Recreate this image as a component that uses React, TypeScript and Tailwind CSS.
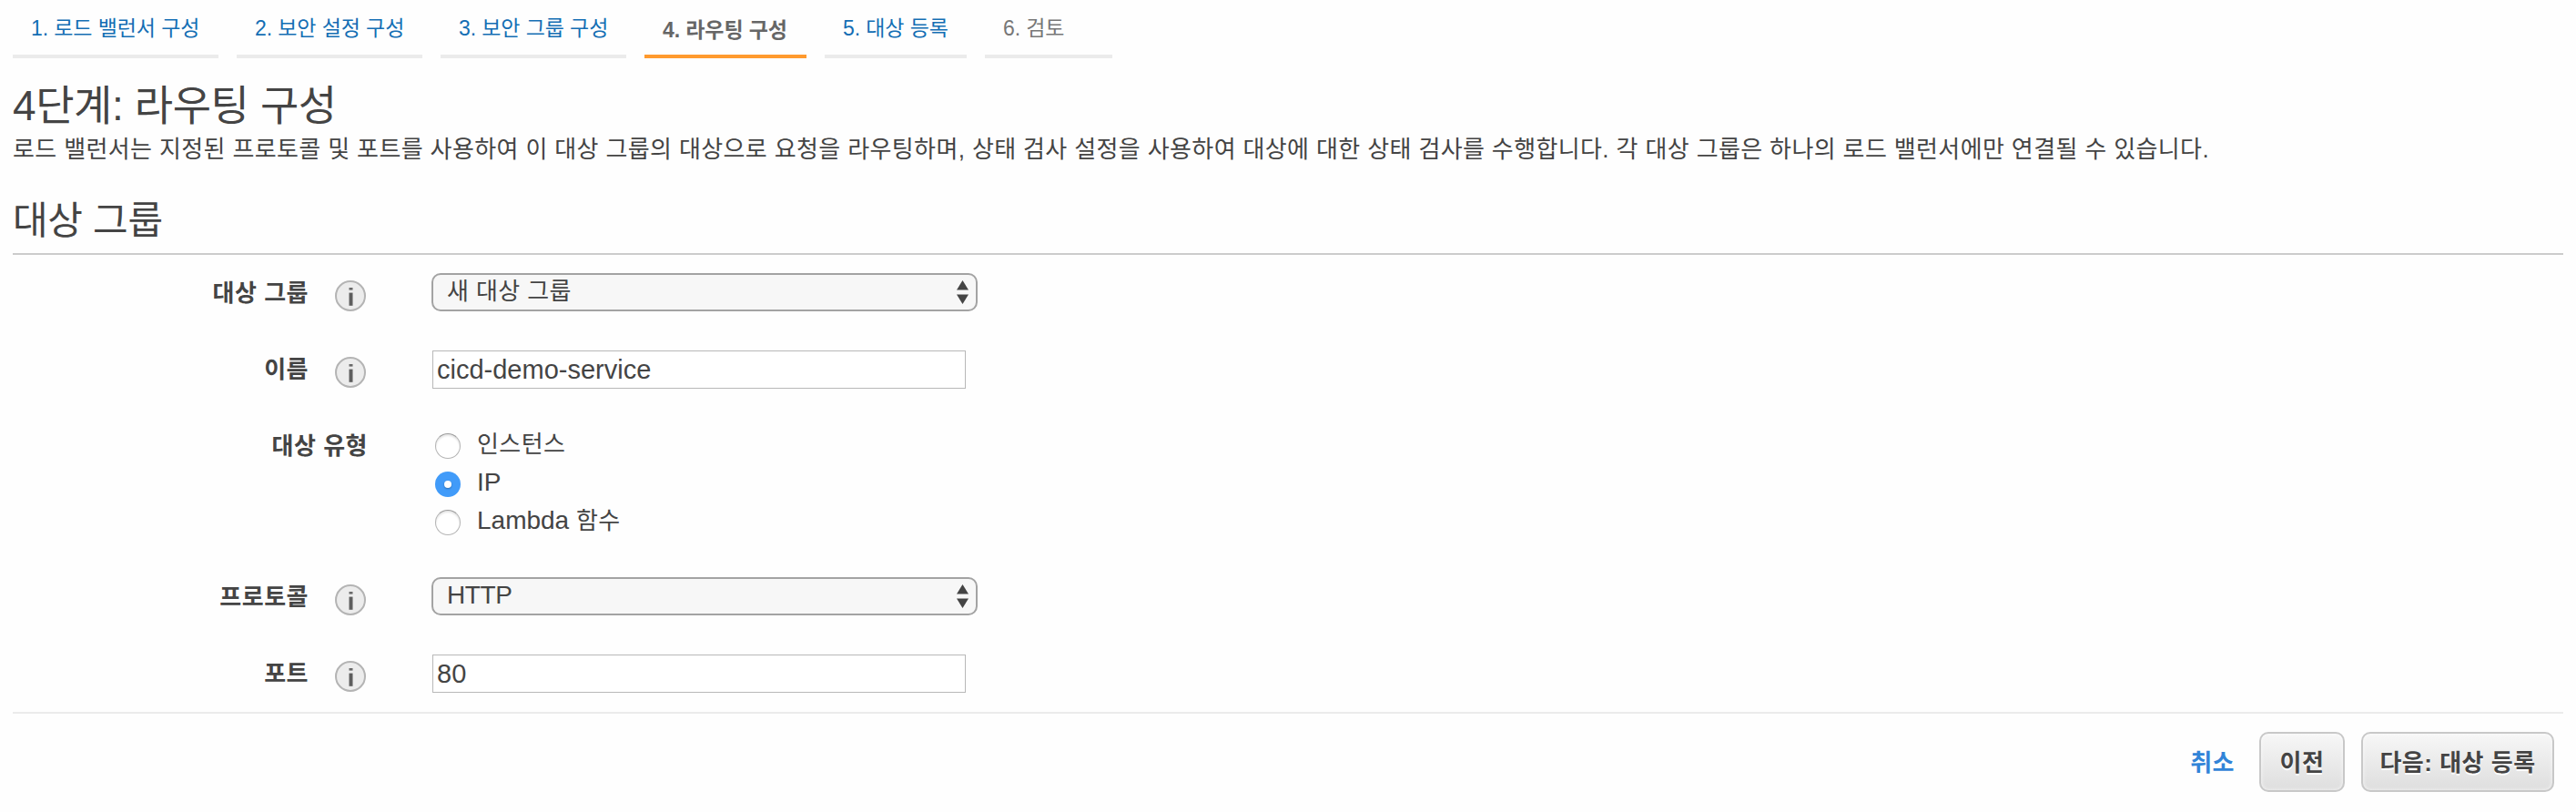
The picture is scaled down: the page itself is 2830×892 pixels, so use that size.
import React from 'react';

const steps = [
  { label: '1. 로드 밸런서 구성', cls: 'w-[226px] border-[#ebebeb] text-[#146eb4]' },
  { label: '2. 보안 설정 구성', cls: 'w-[204px] border-[#ebebeb] text-[#146eb4]' },
  { label: '3. 보안 그룹 구성', cls: 'w-[204px] border-[#ebebeb] text-[#146eb4]' },
  { label: '4. 라우팅 구성', cls: 'w-[178px] border-[#ff9a2e] pt-1 font-bold text-[#666]' },
  { label: '5. 대상 등록', cls: 'w-[156px] border-[#ebebeb] text-[#146eb4]' },
  { label: '6. 검토', cls: 'w-[140px] border-[#ebebeb] text-[#777]' },
];

function InfoIcon() {
  return (
    <svg className="mt-1.5 ml-[29px] size-[34px] shrink-0" viewBox="0 0 34 34">
      <circle cx="17" cy="17" r="16" fill="#ececec" stroke="#b4b4b4" strokeWidth="2" />
      <rect x="15.5" y="8" width="4" height="2.6" fill="#6a6a6a" />
      <rect x="15.5" y="13.6" width="4" height="14.2" fill="#5e5e5e" />
    </svg>
  );
}

function Row({ label, info = true, children }: { label: string; info?: boolean; children: React.ReactNode }) {
  return (
    <div className="flex items-start">
      <div className="flex h-[84px] w-[388px] shrink-0 items-center justify-end text-[26px] font-bold tracking-[0.5px]">
        <span className={info ? '' : '-mr-0.5'}>{label}</span>
        {info && <InfoIcon />}
      </div>
      {children}
    </div>
  );
}

function Select({ children }: { children: React.ReactNode }) {
  return (
    <div className="mt-5 ml-[72px] flex h-[42px] w-[600px] items-center justify-between rounded-[10px] border-2 border-[#a3a3a3] bg-[#f7f7f7] pr-2 pl-[15px]">
      <span className="-mt-0.5 tracking-[0.4px]">{children}</span>
      <svg className="h-[26px] w-[13px]" viewBox="0 0 13 26" fill="#444">
        <path d="M6.5 0L13 10.5H0Z" />
        <path d="M0 15.5H13L6.5 26Z" />
      </svg>
    </div>
  );
}

function TextBox({ value }: { value: string }) {
  return (
    <div className="mt-[21px] ml-[73px] flex h-[42px] w-[586px] items-center border border-[#b8b8b8] bg-white pl-1 text-[29px]">
      {value}
    </div>
  );
}

function Radio({ checked = false, children }: { checked?: boolean; children: React.ReactNode }) {
  return (
    <div className="flex h-[42px] items-center">
      {checked ? (
        <span className="flex size-7 items-center justify-center rounded-full bg-[#419bf9]">
          <span className="size-2 rounded-full bg-white shadow-[0_1px_2px_rgba(0,0,0,0.3)]" />
        </span>
      ) : (
        <span className="size-7 rounded-full border border-[#b4b4b4] border-t-[#999] bg-white shadow-[inset_0_2px_2px_rgba(0,0,0,0.1)]" />
      )}
      <span className="-mt-1 ml-[18px] tracking-[0.4px]">{children}</span>
    </div>
  );
}

const buttonClass =
  'flex h-[66px] items-center justify-center rounded-[10px] border-2 border-[#c8c8c8] bg-linear-to-b from-[#f7f7f7] to-[#dedede] pt-0.5 font-bold shadow-[inset_0_0_4px_rgba(255,255,255,0.8)] [text-shadow:0_2px_0_#fff]';

export default function App() {
  return (
    <div className="h-[892px] w-[2830px] overflow-hidden bg-[#fefefe] px-3.5 font-['Liberation_Sans','Noto_Sans_CJK_KR',sans-serif] text-[26px] leading-[36px] text-[#444]">
      <nav className="flex gap-5">
        {steps.map((s) => (
          <div key={s.label} className={`flex h-16 items-center border-b-4 pl-5 text-[23px] ${s.cls}`}>
            <span className="mt-0.5 tracking-[-0.1px] whitespace-nowrap">{s.label}</span>
          </div>
        ))}
      </nav>

      <h1 className="mt-[22px] text-[46px] leading-[60px] tracking-[-0.4px]">4단계: 라우팅 구성</h1>
      <p className="tracking-[0.375px] whitespace-nowrap">
        로드 밸런서는 지정된 프로토콜 및 포트를 사용하여 이 대상 그룹의 대상으로 요청을 라우팅하며, 상태 검사 설정을
        사용하여 대상에 대한 상태 검사를 수행합니다. 각 대상 그룹은 하나의 로드 밸런서에만 연결될 수 있습니다.
      </p>
      <h2 className="mt-[31px] h-[67px] w-[2802px] border-b-2 border-[#ccc] text-[42px] leading-[60px] tracking-[-0.3px]">
        대상 그룹
      </h2>

      <div className="w-[2802px] border-b-2 border-[#ebebeb]">
        <Row label="대상 그룹">
          <Select>새 대상 그룹</Select>
        </Row>
        <Row label="이름">
          <TextBox value="cicd-demo-service" />
        </Row>
        <Row label="대상 유형" info={false}>
          <div className="mt-[21px] ml-[76px] h-[145px]">
            <Radio>인스턴스</Radio>
            <Radio checked>
              <span className="text-[28px] tracking-normal">IP</span>
            </Radio>
            <Radio>
              <span className="text-[28px] tracking-normal">Lambda </span>
              함수
            </Radio>
          </div>
        </Row>
        <Row label="프로토콜">
          <Select>
            <span className="text-[28px] tracking-[-0.4px]">HTTP</span>
          </Select>
        </Row>
        <Row label="포트">
          <TextBox value="80" />
        </Row>
      </div>

      <div className="mt-5 flex w-[2792px] items-center justify-end tracking-[0.5px]">
        <span className="mt-0.5 mr-[27px] font-bold text-[#3184d8]">취소</span>
        <button className={`mr-[18px] w-[94px] ${buttonClass}`}>이전</button>
        <button className={`w-[212px] ${buttonClass}`}>다음: 대상 등록</button>
      </div>
    </div>
  );
}
